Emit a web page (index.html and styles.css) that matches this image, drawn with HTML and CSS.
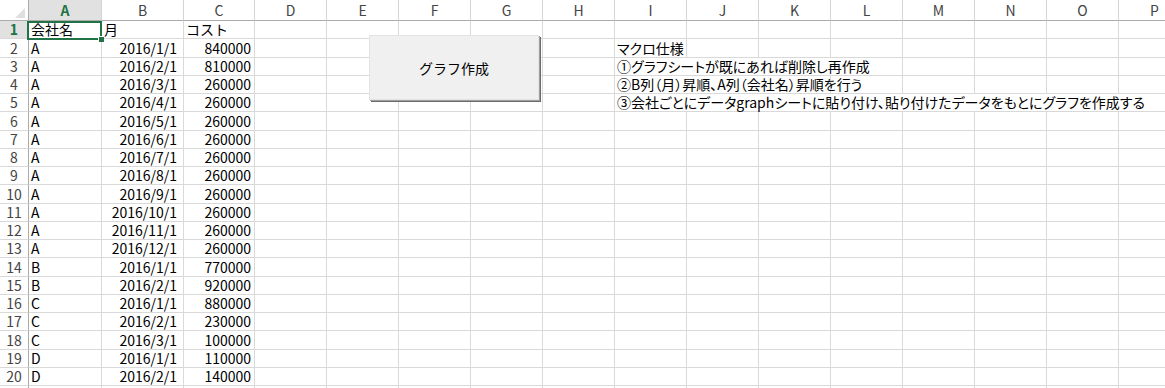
FILE: index.html
```html
<!DOCTYPE html>
<html lang="ja">
<head>
  <meta charset="UTF-8">
  <title>Sheet1</title>
  <link rel="stylesheet" href="styles.css">
</head>
<body>

<div class="sheet">
  <table class="grid" id="grid">
    <colgroup>
      <col class="c-hd"><col class="c-a"><col class="c-b"><col class="c-c">
      <col span="13" class="c-std">
    </colgroup>
    <thead id="head"></thead>
    <tbody id="body"></tbody>
  </table>

  <button class="macro-btn" type="button">グラフ作成</button>
</div>

<script>
  const letters = "ABCDEFGHIJKLMNOP".split("");
  const rows = [
    ["A", "2016/1/1", 840000], ["A", "2016/2/1", 810000], ["A", "2016/3/1", 260000],
    ["A", "2016/4/1", 260000], ["A", "2016/5/1", 260000], ["A", "2016/6/1", 260000],
    ["A", "2016/7/1", 260000], ["A", "2016/8/1", 260000], ["A", "2016/9/1", 260000],
    ["A", "2016/10/1", 260000], ["A", "2016/11/1", 260000], ["A", "2016/12/1", 260000],
    ["B", "2016/1/1", 770000], ["B", "2016/2/1", 920000],
    ["C", "2016/1/1", 880000], ["C", "2016/2/1", 230000], ["C", "2016/3/1", 100000],
    ["D", "2016/1/1", 110000], ["D", "2016/2/1", 140000], ["D", "2016/3/1", 360000]
  ];
  // text in column I, with how many columns it runs over
  const notes = {
    2: ["マクロ仕様", 1],
    3: ["①グラフシートが既にあれば削除し再作成", 4],
    4: ["②B列（月）昇順、A列（会社名）昇順を行う", 3],
    5: ["③会社ごとにデータgraphシートに貼り付け、貼り付けたデータをもとにグラフを作成する", 8]
  };

  let head = '<tr><th class="corner"></th>';
  letters.forEach((l, i) => {
    head += `<th class="${i === 0 ? "hd-sel" : ""}">${l}</th>`;
  });
  document.getElementById("head").innerHTML = head + "</tr>";

  let html = '<tr><th class="rh hd-sel">1</th>' +
    '<td class="active">会社名<span class="handle"></span></td><td>月</td><td>コスト</td>' +
    "<td></td>".repeat(13) + "</tr>";

  rows.forEach((r, i) => {
    const n = i + 2;
    html += `<tr><th class="rh">${n}</th><td>${r[0]}</td><td class="num date">${r[1]}</td><td class="num">${r[2]}</td>`;
    if (notes[n]) {
      const [text, span] = notes[n];
      html += "<td></td>".repeat(5);
      html += `<td class="note" colspan="${span}">${text}</td>`;
      html += "<td></td>".repeat(8 - span);
    } else {
      html += "<td></td>".repeat(13);
    }
    html += "</tr>";
  });
  document.getElementById("body").innerHTML = html;
</script>

</body>
</html>
```

FILE: styles.css
```css
body { margin: 0; background: #fff; overflow: hidden; font-family: "Noto Sans CJK JP", "Noto Sans", sans-serif; }
.sheet { position: relative; width: 1165px; height: 388px; overflow: hidden; }

.grid { border-collapse: separate; border-spacing: 0; table-layout: fixed; width: 1191px; font-size: 14px; color: #000; }
.c-hd { width: 29px; }
.c-a { width: 73px; }
.c-b { width: 82px; }
.c-c { width: 71px; }
.c-std { width: 72px; }

.grid th, .grid td {
  padding: 0 2px; height: 18px; line-height: 17px; white-space: nowrap;
  border-right: 1px solid #d9d9d9; border-bottom: 1px solid #d9d9d9;
  box-sizing: border-box; text-align: left;
}
.grid tbody tr { height: 18.25px; }
.grid td { vertical-align: bottom; }

.grid thead th {
  height: 21px; font-weight: normal; color: #444; text-align: center; line-height: 20px;
  border-bottom-color: #ababab; border-right-color: #d4d4d4;
}
.grid thead th.corner { border-right-color: #ababab; position: relative; }
.corner::after {
  content: ""; position: absolute; right: 3px; bottom: 2px;
  border-style: solid; border-width: 0 0 10px 10px; border-color: transparent transparent #dfdfdf transparent;
}
.grid th.rh { color: #444; font-weight: normal; text-align: center; padding: 0; border-right-color: #ababab; vertical-align: bottom; }
.grid th.hd-sel { background: #e1e1e1; color: #217346; font-weight: bold; }

.grid td.num { text-align: right; padding-right: 3px; }
.grid td.date { padding-right: 6px; }
.grid td.note { font-feature-settings: "palt"; }

.grid td.active { position: relative; }
.active::before {
  content: ""; position: absolute; left: -2px; top: 0; right: -1px; bottom: -2px;
  border: 2px solid #217346;
}
.handle {
  position: absolute; right: -3px; bottom: -4px; width: 5px; height: 5px;
  background: #217346; border: 1px solid #fff; border-right: 0; border-bottom: 0;
}

.macro-btn {
  position: absolute; left: 369px; top: 35px; width: 170px; height: 65px;
  background: #f0f0f0; border: 1px solid #e3e3e3; border-radius: 0;
  box-shadow: 1px 1px 0 #a0a0a0, 2px 2px 0 #6a6a6a;
  font-family: "Noto Sans CJK JP", sans-serif; font-size: 14px; color: #000; padding: 0;
}
```
